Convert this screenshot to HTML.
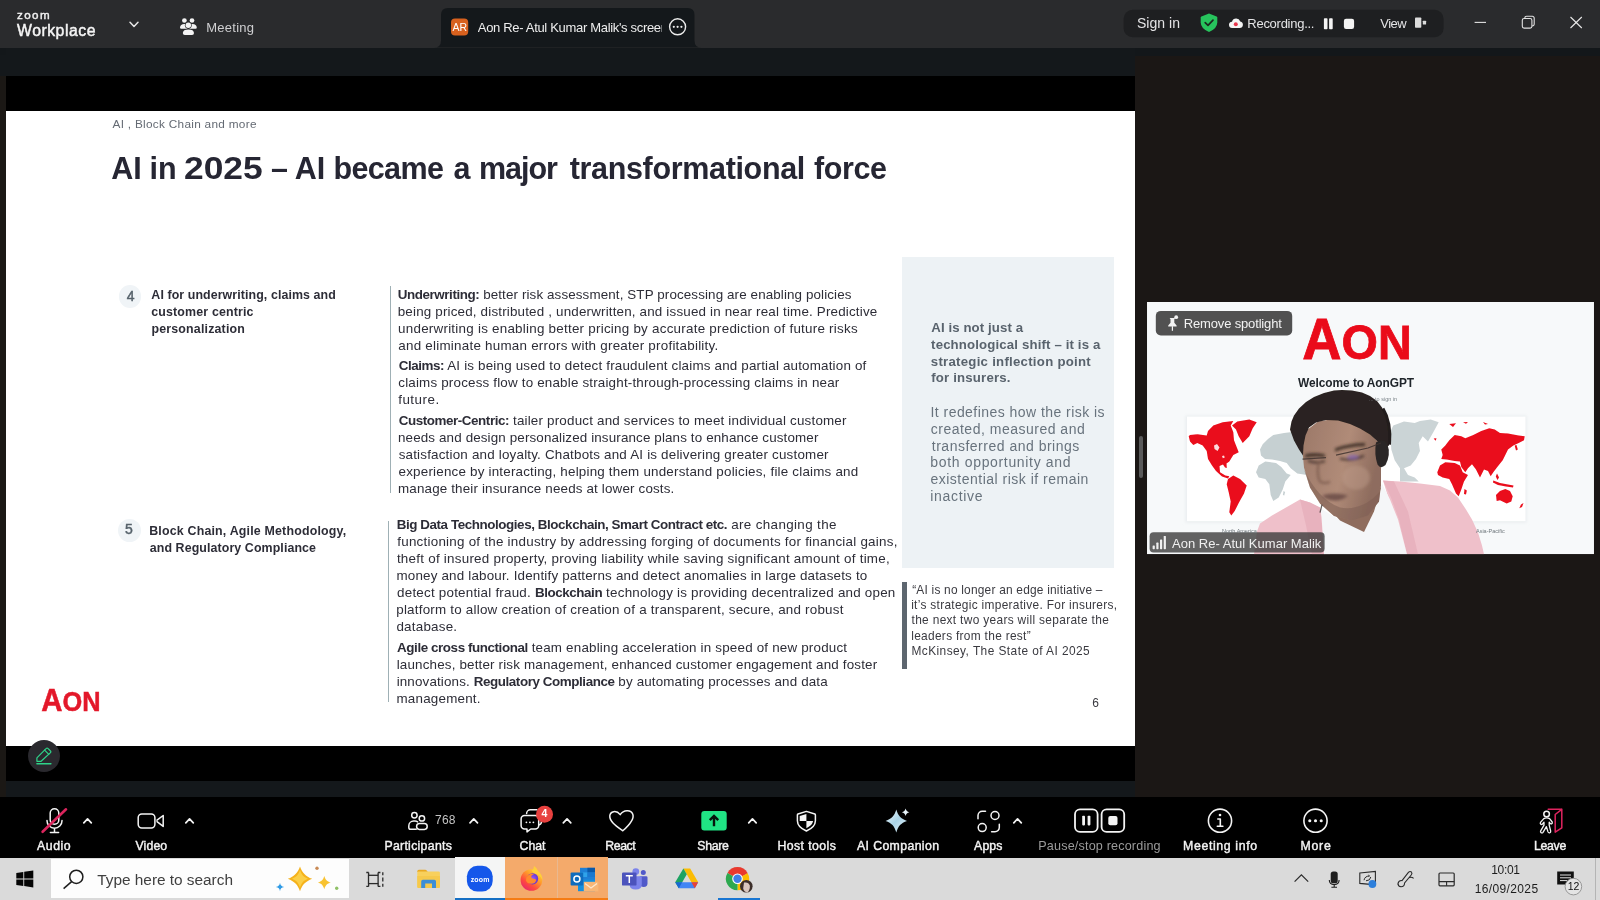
<!DOCTYPE html>
<html lang="en">
<head>
<meta charset="utf-8">
<title>Zoom Workplace - Meeting</title>
<style>
html,body{margin:0;padding:0;background:#1b1715;}
body{width:1600px;height:900px;overflow:hidden;font-family:"Liberation Sans",sans-serif;}
#root{position:relative;width:1600px;height:900px;overflow:hidden;background:#1b1715;opacity:0.9999;}
.a{position:absolute;}
.t{position:absolute;white-space:nowrap;font-family:"Liberation Sans",sans-serif;}
.t b{font-weight:700;letter-spacing:-0.42px;}
svg{position:absolute;overflow:visible;}
.grp{margin:0;padding:0;font-size:0;line-height:0;font-weight:400;position:static;}
</style>
</head>
<body>
<div id="root">
<!-- ===== window chrome backgrounds ===== -->
<div class="a" style="left:0;top:0;width:1600px;height:47.5px;background:#2a2b2d;"></div>
<div class="a" style="left:0;top:47.5px;width:1600px;height:8px;background:#13171a;"></div>
<div class="a" style="left:6px;top:47.5px;width:1129px;height:749.5px;background:#14181b;"></div>
<div class="a" style="left:0;top:55px;width:6px;height:21px;background:#14181b;"></div>
<div class="a" style="left:0;top:76px;width:6px;height:721px;background:#1b1815;"></div>
<div class="a" style="left:6px;top:76px;width:1129px;height:705px;background:#000;"></div>
<div class="a" style="left:6px;top:110.5px;width:1129px;height:635.5px;background:#fff;"></div>
<div class="a" style="left:0;top:797px;width:1600px;height:60.500px;background:#000;"></div>
<div class="a" style="left:0;top:857.500px;width:1600px;height:42.500px;background:#dadada;"></div>
<!-- ===== slide content shapes ===== -->
<div class="a" style="left:902.3px;top:256.7px;width:212px;height:311px;background:#edf2f5;"></div>
<div class="a" style="left:902.2px;top:582px;width:4.6px;height:86.6px;background:#5d666f;"></div>
<div class="a" style="left:389.8px;top:286px;width:1.2px;height:207px;background:#9fb0b5;"></div>
<div class="a" style="left:388.2px;top:521px;width:1.2px;height:181px;background:#9fb0b5;"></div>
<div class="a" style="left:118.700px;top:285.200px;width:22.600px;height:22.600px;border-radius:50%;background:#f0f4f7;"></div>
<div class="a" style="left:117.500px;top:518.600px;width:23px;height:23px;border-radius:50%;background:#f0f4f7;"></div>
<!-- AON logo on slide -->
<svg style="left:40px;top:686px;" width="64" height="28" viewBox="40 686 64 28">
<text x="41.300" y="710.600" font-family="Liberation Sans, sans-serif" font-weight="700" fill="#e3182a" stroke="#e3182a" stroke-width="0.500" textLength="59.200" lengthAdjust="spacingAndGlyphs"><tspan font-size="31.300">A</tspan><tspan font-size="27">ON</tspan></text>
</svg>
<!-- annotate pencil -->
<div class="a" style="left:27.600px;top:739.600px;width:32.800px;height:32.800px;border-radius:50%;background:#2a292e;"></div>
<svg style="left:27px;top:739px;" width="34" height="34" viewBox="27 739 34 34" fill="none" stroke="#2fd389" stroke-width="1.200" stroke-linejoin="round" stroke-linecap="round">
<path d="M36.900 757.800 L46.300 748.400 a1.100 1.100 0 0 1 1.600 0 l2.600 2.600 a1.100 1.100 0 0 1 0 1.600 L41.100 761.300 H36.900 Z"/>
<path d="M44.600 750.100 l4.200 4.200"/>
<path d="M36.900 763.700 H50.900" stroke-width="1.400"/>
</svg>
<!-- ===== title bar ===== -->
<svg style="left:0;top:0;" width="1600" height="48" viewBox="0 0 1600 48">
<path d="M434 47.6 Q441 47.6 441 40.5 L441 15 Q441 8 448 8 L687.5 8 Q694.5 8 694.5 15 L694.5 40.5 Q694.5 47.6 701.5 47.6 Z" fill="#14181b"/>
<path d="M130 22.3 l4 4.2 l4 -4.2" fill="none" stroke="#e6e6e6" stroke-width="1.5" stroke-linecap="round" stroke-linejoin="round"/>
<!-- meeting people icon -->
<g fill="#f4f4f4">
<circle cx="184.400" cy="20.500" r="2.350"/>
<circle cx="192" cy="20.500" r="2.350"/>
<path d="M180 27.600 q0.300 -3.600 4.300 -3.600 q2.300 0 3.200 1.400 v3.400 h-6.300 q-1.200 0 -1.200 -1.200 Z"/>
<path d="M196.800 27.600 q-0.300 -3.600 -4.300 -3.600 q-2.300 0 -3.200 1.400 v3.400 h6.300 q1.200 0 1.200 -1.200 Z"/>
<circle cx="188.300" cy="25.300" r="3.400" fill="#2a2b2d"/>
<circle cx="188.300" cy="25.300" r="2.750"/>
<path d="M182.800 33 q0.300 -3.400 5.600 -3.400 q5.300 0 5.600 3.400 q0 2.100 -2 2.100 h-7.200 q-2 0 -2 -2.100 Z"/>
</g>
<rect x="451" y="18.600" width="17.200" height="16.800" rx="4" fill="#d8611e"/>
<circle cx="677.600" cy="26.800" r="8" fill="none" stroke="#ececec" stroke-width="1.400"/>
<circle cx="673.800" cy="26.800" r="1.100" fill="#ececec"/><circle cx="677.600" cy="26.800" r="1.100" fill="#ececec"/><circle cx="681.400" cy="26.800" r="1.100" fill="#ececec"/>
<rect x="1123.600" y="9.800" width="320" height="27.400" rx="9" fill="#1e1f21"/>
<!-- shield -->
<path d="M1209 13.600 l7.600 2.800 q0.700 0.300 0.700 1 v4.800 q0 6.300 -8.300 9.700 q-8.300 -3.400 -8.300 -9.700 v-4.800 q0 -0.700 0.700 -1 Z" fill="#27c45d"/>
<path d="M1205.200 22.600 l2.800 2.800 l5 -5.300" fill="none" stroke="#1c2a20" stroke-width="1.700" stroke-linecap="round" stroke-linejoin="round"/>
<!-- cloud -->
<path d="M1232.400 28.100 a3.200 3.200 0 0 1 -0.400 -6.400 a4.400 4.400 0 0 1 8.300 -0.300 a3.400 3.400 0 0 1 -0.600 6.700 Z" fill="#f4f4f4"/>
<circle cx="1235.800" cy="24.200" r="2" fill="#e8364b"/>
<rect x="1323.900" y="18.300" width="3.600" height="10.900" rx="0.800" fill="#f4f4f4"/>
<rect x="1329.100" y="18.300" width="3.600" height="10.900" rx="0.800" fill="#f4f4f4"/>
<rect x="1343.900" y="18.700" width="10.200" height="10.200" rx="2.200" fill="#f4f4f4"/>
<rect x="1415" y="17.500" width="6.300" height="10.300" rx="0.800" fill="#dcdcdc"/>
<rect x="1422.800" y="20.700" width="3.300" height="3.800" rx="0.600" fill="#dcdcdc"/>
<!-- window controls -->
<path d="M1474.600 22.400 H1486" stroke="#e2e2e2" stroke-width="1.100"/>
<rect x="1522.300" y="18.500" width="9.600" height="9.600" rx="1.800" fill="none" stroke="#e2e2e2" stroke-width="1.100"/>
<path d="M1524.800 18.300 v-0.200 a1.800 1.800 0 0 1 1.800 -1.800 h5.800 a1.800 1.800 0 0 1 1.800 1.800 v6 a1.800 1.800 0 0 1 -1.800 1.800 h-0.300" fill="none" stroke="#e2e2e2" stroke-width="1.100"/>
<path d="M1570.500 17 l11.300 11 M1581.800 17 l-11.300 11" stroke="#e8e8e8" stroke-width="1.100"/>
</svg>
<!-- ===== meeting toolbar icons ===== -->
<svg style="left:0;top:797px;" width="1600" height="60" viewBox="0 797 1600 60" fill="none" stroke="#f4f4f4" stroke-width="1.5" stroke-linecap="round" stroke-linejoin="round">
<!-- mic muted -->
<rect x="50.200" y="808.800" width="8.600" height="15.400" rx="4.300"/>
<path d="M47 820.400 v0.300 a7.500 7.500 0 0 0 15 0 v-0.300 M54.500 828.200 v4.300 M50.400 832.600 h8.200"/>
<path d="M42.600 831.800 L66 809.300" stroke="#da255d" stroke-width="2.600"/>
<path d="M83.800 822.800 l3.750 -4 l3.750 4" stroke-width="1.700"/>
<!-- video -->
<rect x="138.200" y="814" width="16.700" height="13.900" rx="3.600"/>
<path d="M157 820.200 l6.200 -4.700 v10.900 l-6.200 -4.700"/>
<path d="M185.800 822.800 l3.750 -4 l3.750 4" stroke-width="1.700"/>
<!-- participants -->
<circle cx="414.400" cy="815.300" r="2.700"/>
<path d="M416.200 829.200 h-5.600 a1.800 1.800 0 0 1 -1.800 -1.800 v-1.500 a4.800 4.800 0 0 1 4.800 -4.800 h1.400 a4.600 4.600 0 0 1 2.600 0.800"/>
<circle cx="421.900" cy="818.400" r="2.700"/>
<path d="M419.500 823.400 h4.800 a2.900 2.900 0 0 1 2.900 2.900 v0.300 a2.800 2.800 0 0 1 -2.800 2.800 h-5 a2.800 2.800 0 0 1 -2.800 -2.800 v-0.300 a2.900 2.900 0 0 1 2.900 -2.900 Z"/>
<path d="M470 822.800 l3.750 -4 l3.750 4" stroke-width="1.700"/>
<!-- chat -->
<path d="M526.600 813.600 a3.800 3.800 0 0 1 3.800 -3.800 h6.500 M541.500 818 v3.500 a3.600 3.600 0 0 1 -2.400 3.400"/>
<path d="M524.600 815.600 h10.600 a3.500 3.500 0 0 1 3.500 3.500 v6.400 a3.500 3.500 0 0 1 -3.500 3.500 h-4.400 l-3.800 2.900 v-2.900 h-2.400 a3.500 3.500 0 0 1 -3.500 -3.500 v-6.400 a3.500 3.500 0 0 1 3.500 -3.500 Z"/>
<circle cx="526.400" cy="822.300" r="0.900" fill="#f4f4f4" stroke="none"/><circle cx="529.900" cy="822.300" r="0.900" fill="#f4f4f4" stroke="none"/><circle cx="533.400" cy="822.300" r="0.900" fill="#f4f4f4" stroke="none"/>
<circle cx="544.500" cy="814.300" r="8.500" fill="#e8413f" stroke="none"/>
<path d="M563.300 822.800 l3.750 -4 l3.750 4" stroke-width="1.700"/>
<!-- heart -->
<path d="M622.800 830.800 C616.500 826.200 609.300 821.400 609.800 815.800 C610.200 811.400 616.200 809.600 620.200 814.600 C623.400 809.800 631 809.400 632.800 814.200 C634.800 819.600 628.200 826 622.800 830.800 Z"/>
<!-- share -->
<rect x="701.300" y="811" width="25.400" height="19.600" rx="3" fill="#20e384" stroke="none"/>
<path d="M714 826.200 v-9.600 M709.800 820.200 l4.200 -4.200 l4.200 4.200" stroke="#07140c" stroke-width="2.400" stroke-linecap="butt" stroke-linejoin="miter"/>
<path d="M748.700 822.800 l3.750 -4 l3.750 4" stroke-width="1.700"/>
<!-- host tools shield -->
<path d="M806.400 811.400 l8.400 2.600 q0.600 0.200 0.600 0.900 v5.800 q0 6.300 -9 10.300 q-9 -4 -9 -10.300 v-5.800 q0 -0.700 0.600 -0.900 Z"/>
<path d="M806.400 814 v7.100 h-6.700 v-5 Z M806.400 821.100 h6.700 q-0.600 4.200 -6.700 7.200 Z" fill="#f4f4f4" stroke="none"/>
<!-- apps -->
<path d="M985.500 811.300 h-3.200 a4.300 4.300 0 0 0 -4.300 4.300 v3.200"/>
<circle cx="995" cy="815.500" r="4"/>
<circle cx="982.200" cy="827.600" r="4"/>
<path d="M991.600 831.700 h3.400 a4.300 4.300 0 0 0 4.300 -4.300 v-3.200"/>
<path d="M1013.800 822.800 l3.750 -4 l3.750 4" stroke-width="1.700"/>
<!-- pause/stop -->
<rect x="1075" y="809.300" width="22.600" height="22.600" rx="5" stroke-width="1.800"/>
<rect x="1101.600" y="809.300" width="22.600" height="22.600" rx="5" stroke-width="1.800"/>
<rect x="1082.200" y="815.800" width="2.800" height="9.600" rx="0.800" fill="#f4f4f4" stroke="none"/>
<rect x="1087.600" y="815.800" width="2.800" height="9.600" rx="0.800" fill="#f4f4f4" stroke="none"/>
<rect x="1108.300" y="816" width="9.200" height="9.200" rx="2" fill="#f4f4f4" stroke="none"/>
<!-- info -->
<circle cx="1220" cy="820.700" r="11.600" stroke-width="1.600"/>
<circle cx="1220" cy="815" r="1.300" fill="#f4f4f4" stroke="none"/>
<path d="M1217.800 819 h2.500 v7.200 M1217.300 826.300 h5.600" stroke-width="1.600"/>
<!-- more -->
<circle cx="1315.500" cy="820.700" r="11.600" stroke-width="1.600"/>
<circle cx="1309.800" cy="820.700" r="1.550" fill="#f4f4f4" stroke="none"/><circle cx="1315.500" cy="820.700" r="1.550" fill="#f4f4f4" stroke="none"/><circle cx="1321.200" cy="820.700" r="1.550" fill="#f4f4f4" stroke="none"/>
<!-- leave -->
<path d="M1548.200 809.300 h13.600 v18.600 l-6.600 4.300 v-17.700 l6.600 -5.200" stroke="#df245f" stroke-width="1.500"/>
<circle cx="1546.600" cy="814" r="2.800"/>
<path d="M1543.800 818.600 q2.800 -1.600 5.800 0 l2.600 3.400 q0.600 1.200 -0.600 1.800 q-1 0.400 -1.700 -0.600 l-0.700 -1 v3 l1.500 6 q0.200 1.400 -1 1.700 q-1.300 0.200 -1.700 -1 l-1.600 -5.200 l-3.400 5.600 q-0.800 1 -1.900 0.400 q-1 -0.700 -0.400 -1.900 l3.300 -5.600 v-3 l-1.500 1.800 q-0.800 0.800 -1.700 0.200 q-0.900 -0.800 -0.300 -1.800 Z" stroke-width="1.300"/>
</svg>
<!-- AI companion sparkle -->
<svg style="left:880px;top:805px;" width="34" height="30" viewBox="880 805 34 30">
<defs><linearGradient id="aig" x1="0" y1="0" x2="1" y2="1"><stop offset="0" stop-color="#f4fbff"/><stop offset="0.500" stop-color="#a9d3e6"/><stop offset="1" stop-color="#e9f5fb"/></linearGradient></defs>
<path d="M896.300 809.600 C898.200 816 900.800 818.800 907 821 C900.800 823.200 898.200 826 896.300 832.400 C894.400 826 891.800 823.200 885.600 821 C891.800 818.800 894.400 816 896.300 809.600 Z" fill="url(#aig)"/>
<path d="M905.600 808.400 C906.300 810.700 907.100 811.500 909.400 812.200 C907.100 812.900 906.300 813.700 905.600 816 C904.900 813.700 904.100 812.900 901.800 812.200 C904.100 811.500 904.900 810.700 905.600 808.400 Z" fill="#e6f3fa"/>
</svg>
<!-- ===== windows taskbar ===== -->
<div class="a" style="left:51.300px;top:858.800px;width:297.500px;height:39.400px;background:#fdfdfd;"></div>
<div class="a" style="left:455px;top:857px;width:50.200px;height:43px;background:#f5f5f5;"></div>
<div class="a" style="left:455px;top:897.800px;width:50.200px;height:2.200px;background:#1670c4;"></div>
<div class="a" style="left:505.200px;top:857px;width:103.200px;height:43px;background:#f4aa6b;"></div>
<div class="a" style="left:556.900px;top:857px;width:1.300px;height:43px;background:#e9b88f;"></div>
<div class="a" style="left:505.200px;top:897.800px;width:103.200px;height:2.200px;background:#f57c14;"></div>
<div class="a" style="left:717.600px;top:897.800px;width:42px;height:2.200px;background:#1976d2;"></div>
<div class="a" style="left:1595px;top:857.500px;width:1px;height:42.500px;background:#b4b4b4;"></div>
<svg style="left:0;top:857px;" width="1600" height="43" viewBox="0 857 1600 43">
<!-- windows logo -->
<path d="M16.300 872.900 l7 -1 v6.600 h-7 Z M24.200 871.800 l9.100 -1.300 v8 h-9.100 Z M16.300 879.400 h7 v6.600 l-7 -1 Z M24.200 879.400 h9.100 v8 l-9.100 -1.300 Z" fill="#050505"/>
<!-- search glass -->
<circle cx="76.300" cy="876.800" r="6.600" fill="none" stroke="#1d1d1d" stroke-width="1.500"/>
<path d="M71.600 881.600 L63.600 888.600" stroke="#1d1d1d" stroke-width="1.500"/>
<!-- sparkles -->
<path d="M300 866.400 C302.200 872.800 305.600 876.200 312.200 878.800 C305.600 881.400 302.200 884.800 300 891.200 C297.800 884.800 294.400 881.400 287.800 878.800 C294.400 876.200 297.800 872.800 300 866.400 Z" fill="#f5b21c"/>
<path d="M300 870 C301.400 874.600 303.600 877 308 878.800 C303.600 880.600 301.400 883 300 887.600 C298.600 883 296.400 880.600 292 878.800 C296.400 877 298.600 874.600 300 870 Z" fill="#fbcf47"/>
<path d="M324.300 876 C325.400 879.800 327 881.400 330.800 882.600 C327 883.800 325.400 885.400 324.300 889.200 C323.200 885.400 321.600 883.800 317.800 882.600 C321.600 881.400 323.200 879.800 324.300 876 Z" fill="#f8c230"/>
<path d="M280 882.800 C280.400 885.400 281.400 886.400 284.200 887 C281.400 887.600 280.400 888.600 280 891.200 C279.600 888.600 278.600 887.600 275.800 887 C278.600 886.400 279.600 885.400 280 882.800 Z" fill="#2f9be6"/>
<circle cx="317" cy="868.200" r="1.700" fill="#c98a55"/>
<circle cx="336.700" cy="888.200" r="1.700" fill="#8fc167"/>
<!-- task view -->
<g fill="none" stroke="#2a2a2a" stroke-width="1.300">
<rect x="368.500" y="875.300" width="9.600" height="8.300"/>
<path d="M366.300 872.500 h2.400 M378 872.500 h2.400 M366.300 886.400 h2.400 M378 886.400 h2.400 M368.600 872.500 v2.800 M378.100 872.500 v2.800 M368.600 883.600 v2.800 M378.100 883.600 v2.800 M382.800 872.300 v3 M382.800 877.600 v4 M382.800 883.800 v3"/>
</g>
<!-- file explorer -->
<path d="M417.300 871.300 q0 -1.500 1.500 -1.500 h6.300 q1.200 0 1.800 1 l0.900 1.300 h-10.500 Z" fill="#e9a922"/>
<rect x="417.300" y="871.600" width="22.600" height="16.400" rx="1.200" fill="#f8d05c"/>
<path d="M417.300 876 h22.600 v10.800 q0 1.200 -1.200 1.200 h-20.200 q-1.200 0 -1.200 -1.200 Z" fill="#f6c94c"/>
<path d="M421.200 888 v-6.600 q0 -1.600 1.600 -1.600 h11.600 q1.600 0 1.600 1.600 v6.600 h-4 v-4.400 h-6.800 v4.400 Z" fill="#3c8ed6"/>
<!-- zoom app -->
<rect x="466.900" y="865.800" width="25.800" height="25.800" rx="10.500" fill="#1557ea"/>
<!-- firefox -->
<defs>
<linearGradient id="ffg" x1="0.850" y1="0.100" x2="0.200" y2="0.950"><stop offset="0" stop-color="#ffd53e"/><stop offset="0.350" stop-color="#ff9a2a"/><stop offset="0.700" stop-color="#ff4a3e"/><stop offset="1" stop-color="#e8286a"/></linearGradient>
<radialGradient id="ffp" cx="0.500" cy="0.500" r="0.600"><stop offset="0" stop-color="#9a5cff"/><stop offset="1" stop-color="#5b2fc4"/></radialGradient>
</defs>
<circle cx="531.400" cy="880" r="10.800" fill="url(#ffg)"/>
<path d="M534 866 q3.400 2 4.600 5.800 q3.800 3.400 3.800 8.200 q-2.400 -4.800 -6.400 -6 q-3 -0.800 -4.200 -3.200 q2.200 -1.800 2.200 -4.800 Z" fill="#ffcf3a"/>
<circle cx="532.600" cy="878.800" r="5.600" fill="url(#ffp)"/>
<path d="M526 880.400 q0.200 -5 4.400 -6.400 q2 -0.600 3.600 0.200 q-2.800 0.600 -2.800 2.600 q0.200 1.800 2.400 2 q2 0 2.600 1.400 q-1 3.600 -5 3.600 q-4 -0.200 -5.200 -3.400 Z" fill="#ff8a2c"/>
<!-- outlook -->
<rect x="580" y="867.800" width="15" height="13.600" fill="#1e7fd6"/>
<rect x="587.400" y="867.800" width="7.600" height="4.600" fill="#0a58a8"/>
<rect x="580" y="872.400" width="7.400" height="4.600" fill="#2fa3ea"/>
<rect x="587.400" y="872.400" width="7.600" height="4.600" fill="#1a78cf"/>
<rect x="578" y="879.600" width="17" height="11.600" fill="#1490df"/>
<rect x="570.600" y="872.600" width="12.600" height="12.800" rx="1" fill="#0f6cbd"/>
<circle cx="576.900" cy="879" r="3" fill="none" stroke="#ffffff" stroke-width="1.500"/>
<path d="M583.800 881.800 h14.600 v9.600 h-14.600 Z" fill="#f7b777"/>
<path d="M585 883.400 l6 4.600 l6 -4.600" fill="none" stroke="#fde7cf" stroke-width="1.300"/>
<!-- teams -->
<circle cx="635.800" cy="871.600" r="3.400" fill="#7b83eb"/>
<circle cx="643.300" cy="872.400" r="2.500" fill="#5059c9"/>
<path d="M639.800 876.200 h6.400 q1.300 0 1.300 1.300 v5.700 q0 3.800 -3.800 3.800 q-3.900 0 -3.900 -3.800 Z" fill="#5059c9"/>
<path d="M629.600 876.200 h11 q1.200 0 1.200 1.200 v6.800 q0 5.400 -6.100 5.400 q-6.100 0 -6.100 -5.400 Z" fill="#7b83eb"/>
<rect x="622" y="872.400" width="14.500" height="13.200" rx="1.200" fill="#4b53bc"/>
<path d="M625.800 875.800 h7 M629.300 875.800 v7.200" stroke="#ffffff" stroke-width="1.500" fill="none"/>
<!-- drive -->
<path d="M683.400 868.400 h6.800 l8 13.800 h-6.800 Z" fill="#fbbc04"/>
<path d="M683.400 868.400 l3.400 5.900 l-8 13.900 l-3.600 -6 Z" fill="#1ea362"/>
<path d="M679 882.200 h19.200 l-3.400 6 h-16 Z" fill="#4285f4"/>
<path d="M691.400 882.200 h6.800 l-3.400 6 Z" fill="#ea4335"/>
<path d="M675.200 882.200 l3.600 6 l3.400 -6 Z" fill="#1967d2"/>
<!-- chrome -->
<path d="M737.50 878.70 L727.45 872.90 A11.6 11.6 0 0 1 747.55 872.90 Z" fill="#e8392e"/>
<path d="M737.50 878.70 L747.55 872.90 A11.6 11.6 0 0 1 737.50 890.30 Z" fill="#fdbd00"/>
<path d="M737.50 878.70 L737.50 890.30 A11.6 11.6 0 0 1 727.45 872.90 Z" fill="#2da94f"/>
<path d="M737.50 873.40 L747.55 872.90 L742.09 876.05 Z" fill="#e8392e"/>
<circle cx="737.5" cy="878.7" r="5.3" fill="#ffffff"/>
<circle cx="737.5" cy="878.7" r="4.200" fill="#3f7fe8"/>
<circle cx="746.300" cy="886.300" r="6.300" fill="#3c2e2a"/>
<path d="M744 882.600 q4.400 -1 5.800 2.800 q0.400 4.600 -2.400 7 q-3.600 -0.400 -4.200 -4 Z" fill="#d9c6be"/>
<!-- tray -->
<path d="M1294.600 881.600 l6.800 -6.800 l6.800 6.800" fill="none" stroke="#2a2a2a" stroke-width="1.200"/>
<rect x="1330.700" y="871.500" width="7" height="11.800" rx="2.600" fill="#1f1f1f"/>
<path d="M1329.300 880 q0 4.600 4.900 4.600 q4.900 0 4.900 -4.600 M1334.200 884.600 v2.600 M1331.400 887.300 h5.600" fill="none" stroke="#1f1f1f" stroke-width="1.100"/>
<path d="M1359.800 873 l15.600 -1.600 v13.400 l-15.600 -1.400 Z" fill="none" stroke="#2a2a2a" stroke-width="1.100"/>
<path d="M1364 880.200 q1 -4.400 5.400 -4 l-0.800 -1.400 M1370.800 877 q-0.600 3.800 -4.800 3.800" fill="none" stroke="#2a2a2a" stroke-width="1"/>
<circle cx="1372.400" cy="884" r="3.900" fill="#2d7fdb"/>
<path d="M1398 883.600 q0.600 -3.400 4 -3 l6.400 -8.200 q1.600 -1.600 3 -0.400 q1.200 1.400 -0.200 3 l-6.600 8 q-0.200 3.800 -3.600 3.800 q-3 -0.200 -3 -3.200 Z M1408.800 877.800 q2.800 -1.400 4.800 0.600" fill="none" stroke="#2a2a2a" stroke-width="1.100"/>
<rect x="1439" y="873" width="15.200" height="12.800" rx="1" fill="none" stroke="#2a2a2a" stroke-width="1.200"/>
<path d="M1439 881.600 h15.200 M1446.600 881.600 v4.200" stroke="#2a2a2a" stroke-width="1.100"/>
<path d="M1557.200 871.400 h16.600 v13 h-11.800 l-4.800 0 Z" fill="#111"/>
<path d="M1560 875 h11 M1560 877.800 h11 M1560 880.600 h7" stroke="#e1e1e1" stroke-width="1"/>
<circle cx="1573.400" cy="886.600" r="8.300" fill="#e4e4e4" stroke="#8e8e8e" stroke-width="0.900"/>
</svg>
<!-- ===== right panel: spotlight video tile ===== -->
<div class="a" style="left:1139px;top:436px;width:3.600px;height:42px;border-radius:2px;background:#5a5a5a;"></div>
<svg style="left:1147px;top:302.400px;" width="447" height="252.200" viewBox="1147 302.400 447 252.200">
<defs>
<clipPath id="tileclip"><rect x="1147" y="302.400" width="447" height="252.200"/></clipPath>
<filter id="soft" x="-5%" y="-5%" width="110%" height="110%"><feGaussianBlur stdDeviation="0.700"/></filter>
<filter id="soft2" x="-10%" y="-10%" width="120%" height="120%"><feGaussianBlur stdDeviation="1.600"/></filter>
<linearGradient id="skin" x1="0" y1="0" x2="1" y2="0.300"><stop offset="0" stop-color="#9b7868"/><stop offset="0.600" stop-color="#b08b78"/><stop offset="1" stop-color="#8e6c5e"/></linearGradient>
</defs>
<g clip-path="url(#tileclip)">
<rect x="1147" y="302.400" width="447" height="252.200" fill="#f7f9fa"/>
<!-- map card -->
<rect x="1185.500" y="416" width="341" height="107" fill="#e9edef" filter="url(#soft2)"/>
<rect x="1187" y="417" width="338.500" height="104.600" fill="#ffffff"/>
<g filter="url(#soft)">
<!-- left map: americas red -->
<path d="M1188.7 436.7 L1190.0 435.3 L1197.3 434.7 L1206.7 436.0 L1208.0 431.3 L1213.3 426.0 L1222.7 422.7 L1233.3 421.3 L1230.7 426.0 L1233.3 432.7 L1234.0 440.7 L1238.7 452.7 L1233.3 455.3 L1229.3 462.0 L1226.5 464.0 L1226.8 468.5 L1225.0 468.0 L1223.0 465.0 L1219.5 466.5 L1220.0 472.7 L1225.3 476.0 L1229.3 476.7 L1228.0 479.0 L1222.0 477.0 L1216.0 471.3 L1212.0 466.0 L1208.0 459.3 L1206.7 451.3 L1202.7 446.0 L1197.3 443.3 L1193.3 445.3 L1190.0 442.0 Z" fill="#ea0b1a"/>
<path d="M1232.0 426.0 L1237.3 422.0 L1249.3 420.0 L1256.7 422.7 L1252.7 428.7 L1249.3 436.7 L1242.7 443.3 L1238.7 436.7 L1236.0 430.0 Z" fill="#ea0b1a"/>
<path d="M1228.0 479.3 L1233.3 476.0 L1240.0 479.3 L1246.7 486.0 L1244.0 494.0 L1238.7 503.3 L1234.7 511.3 L1231.3 516.0 L1229.3 512.7 L1230.7 502.0 L1228.7 492.7 L1226.7 484.7 Z" fill="#ea0b1a"/>
<!-- left map: europe africa grey -->
<path d="M1260.0 450.0 L1262.7 444.7 L1268.0 439.3 L1273.3 435.3 L1284.0 433.5 L1296.0 432.0 L1310.0 431.0 L1310.0 476.0 L1297.3 474.0 L1290.7 468.7 L1286.7 463.3 L1280.0 461.5 L1272.0 460.0 L1265.0 459.5 L1261.0 456.0 Z" fill="#c6d0d2"/>
<path d="M1256.0 472.7 L1258.7 466.0 L1265.3 462.0 L1276.0 463.3 L1281.3 467.3 L1286.7 474.0 L1290.7 475.3 L1285.3 482.0 L1282.7 490.0 L1278.7 498.0 L1273.3 501.3 L1270.7 495.3 L1269.3 484.7 L1265.3 479.3 L1258.7 478.0 Z" fill="#c6d0d2"/>
<path d="M1283.5 491.5 l1.600 1 l-0.800 3.500 l-1.400 -0.700 Z" fill="#c6d0d2"/>
<!-- right map: north america grey -->
<path d="M1390.0 432.7 L1393.3 426.0 L1404.0 422.0 L1414.7 423.3 L1420.0 421.3 L1430.7 420.0 L1438.7 422.7 L1433.3 432.7 L1428.0 442.0 L1422.7 436.7 L1418.7 443.3 L1420.0 451.3 L1416.0 459.3 L1410.7 466.0 L1404.0 468.7 L1408.0 475.3 L1414.7 478.0 L1418.7 482.0 L1400.0 482.0 L1400.0 468.7 L1394.7 460.7 L1391.3 450.0 L1390.7 440.7 Z" fill="#cbd4d6"/>
<!-- right map: eurasia africa australia red -->
<path d="M1441.3 450.0 L1445.3 446.0 L1449.3 440.7 L1454.7 435.3 L1461.3 436.7 L1465.3 438.7 L1473.3 435.3 L1481.3 431.3 L1489.3 428.7 L1494.7 430.0 L1500.0 433.3 L1508.0 434.0 L1518.7 436.0 L1524.7 436.7 L1524.0 440.7 L1518.7 443.3 L1513.3 446.0 L1508.0 450.0 L1505.3 455.3 L1502.7 460.7 L1497.3 467.3 L1493.3 472.7 L1490.7 476.7 L1488.0 471.3 L1484.0 470.0 L1480.0 478.0 L1476.0 470.0 L1472.0 464.7 L1468.0 468.7 L1465.3 472.7 L1461.3 467.3 L1460.0 462.0 L1454.7 461.3 L1446.7 460.0 L1441.3 459.3 L1442.7 455.3 Z" fill="#ea0b1a"/>
<path d="M1437.3 472.7 L1440.0 466.0 L1445.3 462.7 L1454.7 463.3 L1460.0 466.0 L1462.7 472.7 L1468.0 475.3 L1464.0 482.0 L1461.3 490.0 L1458.7 496.7 L1456.0 494.0 L1452.0 484.7 L1449.3 479.3 L1442.7 478.0 L1438.0 475.3 Z" fill="#ea0b1a"/>
<path d="M1496.0 495.3 L1500.0 491.3 L1505.3 489.3 L1510.0 491.3 L1512.7 496.7 L1511.3 502.0 L1506.7 504.0 L1500.0 500.7 L1496.7 501.3 Z" fill="#ea0b1a"/>
<path d="M1464.5 489.5 L1466.8 491.0 L1466.0 495.0 L1464.0 494.5 Z" fill="#ea0b1a"/>
<path d="M1519.3 508.7 L1521.0 505.0 L1523.5 503.5 L1522.0 507.5 Z" fill="#ea0b1a"/>
<path d="M1493.3 481.0 L1500.0 483.5 L1508.0 485.0 L1513.5 486.0 L1513.0 487.8 L1506.0 487.0 L1498.0 485.5 L1493.0 483.0 Z" fill="#ea0b1a"/>
<path d="M1449.3 424.3 L1456.0 423.7 L1453.0 427.3 Z" fill="#ea0b1a"/>
<path d="M1433.7 439.0 L1436.5 438.7 L1435.6 441.2 Z" fill="#ea0b1a"/>
<path d="M1483.0 422.3 L1488.0 424.3 L1485.0 424.8 Z" fill="#ea0b1a"/>
<path d="M1463.0 422.6 L1468.0 422.4 L1466.0 424.2 Z" fill="#ea0b1a"/>
<path d="M1514.7 446.0 L1516.5 445.5 L1517.8 450.0 L1516.0 451.0 Z" fill="#ea0b1a"/>
<path d="M1497.0 474.0 L1499.0 478.0 L1497.5 480.5 L1495.8 477.0 Z" fill="#ea0b1a"/>
<path d="M1214 446 l3 -1.500 l2.500 3.500 l-2 3.500 l-3 -2 Z M1222 456.500 l2 -0.600 l0.800 2 l-2 0.800 Z" fill="#ffffff" opacity="0.850"/>
</g>
<!-- person -->
<g filter="url(#soft)">
<!-- jacket -->
<path d="M1254 554.600 L1257 532 L1260 524 L1272 516 L1286 508 L1300 500 L1310 503 L1320 508 L1330 554.600 Z" fill="#efc0ca"/>
<path d="M1383 481 L1400 482 L1420 484 L1440 486.500 L1450 491 L1458 498 L1466 510 L1472 520 L1478 533 L1482 546 L1484 554.600 L1400 554.600 L1392 510 Z" fill="#efc0ca"/>
<path d="M1300 500 L1310 503 L1320 508 L1325 554.600 L1312 554.600 L1306 526 Z" fill="#e5adb9" opacity="0.750"/>
<path d="M1383 481 L1391 498 L1399 520 L1407 554.600 L1418 554.600 L1408 512 L1394 482 Z" fill="#e5adb9" opacity="0.750"/>
<!-- shirt -->
<path d="M1321 509 L1324 554.600 L1407 554.600 L1398 520 L1390 500 L1382 484 L1376 504 L1364 532 L1345 524 Z" fill="#f5f6f8"/>
<!-- neck -->
<path d="M1326 506 L1340 521 L1364 532.500 L1374 512 L1381 488 L1350 496 Z" fill="#8f6c5d"/>
<!-- face -->
<path d="M1302 446 L1305 432 L1318 422 L1336 419 L1354 424 L1370 434 L1378 442 L1381 466 L1381 486 L1379 502 L1368 516 L1352 521 L1334 516.500 L1320 504 L1310 488 L1304 468 Z" fill="url(#skin)"/>
<path d="M1304 470 L1310 488 L1320 504 L1334 516.500 L1352 521 L1368 516 L1379 502 L1380 492 Q1362 512 1340 508 Q1318 500 1304 470 Z" fill="#7e5f54" opacity="0.550"/>
<!-- hair -->
<path d="M1290 430 L1291.500 422 L1294 416 L1299 409 L1306 402.500 L1314 397.500 L1324 393.500 L1334 391 L1342 390.400 L1352 391 L1362 393 L1370 396.500 L1377 401.500 L1382 408 L1386 416 L1388.500 425 L1389.600 434 L1389 446 L1385 448 L1379 443 L1370 435 L1360 429 L1350 424.500 L1338 420.800 L1326 420.500 L1316 423 L1309 428 L1305.500 436 L1303.500 446 L1303 456 L1299 450 L1294 441 Z" fill="#2a2320"/>
<!-- headset -->
<path d="M1376 443 q6.500 -5.500 11.500 2 q3.500 10 -2 20.500 q-5 4.500 -8 -0.500 q-3.500 -10.500 -1.500 -22 Z" fill="#2c2726"/>
<path d="M1383 409 q8.500 14 6.500 36" fill="none" stroke="#221d1c" stroke-width="3"/>
</g>
<g filter="url(#soft2)" opacity="0.900">
<path d="M1305 455 q9 -2.500 20 0 l0 2.500 q-10 -1.500 -20 0.500 Z M1335 449 q14 -5.500 30 -5.500 l0 3 q-15 0 -30 5.500 Z" fill="#33251f"/>
<path d="M1308 461 q8 3.500 17 0.500 M1340 459 q12 3 24 -3" fill="none" stroke="#4b3730" stroke-width="2.400"/>
<ellipse cx="1353" cy="457.500" rx="5.500" ry="2.600" fill="#7d5fd0" opacity="0.550"/>
<path d="M1322 496 q12 -4 26 0 q-6 5.500 -14 5 q-8 -0.500 -12 -5 Z" fill="#6e4f48"/>
<path d="M1319 462 q-3 12 1 20 q5 3 10 0" fill="none" stroke="#7a5a4d" stroke-width="2"/>
<ellipse cx="1356" cy="478" rx="14" ry="12" fill="#bb9986" opacity="0.550"/>
</g>
<path d="M1302.500 459.500 L1326 458 M1336 455.500 L1368 448.500 L1381 443.500" fill="none" stroke="#40322f" stroke-width="1.100" opacity="0.850"/>
<path d="M1322 505 l-2 8" stroke="#2a2320" stroke-width="1.300" opacity="0.700"/>
<!-- remove spotlight pill -->
<rect x="1155.800" y="311.300" width="136.400" height="24.600" rx="5" fill="#4a4a4a" opacity="0.960"/>
<g fill="#f2f2f2"><path d="M1169.600 318.400 h5.600 l-0.900 1.300 v3.500 l2.300 2.600 v1.100 h-8.400 v-1.100 l2.300 -2.600 v-3.500 Z"/><rect x="1171.800" y="326.600" width="1.200" height="4.600"/><circle cx="1176.200" cy="317.600" r="1.900"/></g>
<!-- name label -->
<rect x="1149.600" y="532.600" width="175" height="20.400" rx="4" fill="#3c3c3c" opacity="0.800"/>
<g fill="#f0f0f0"><rect x="1152.600" y="545.800" width="2.200" height="3.800" rx="0.600"/><rect x="1156.300" y="543" width="2.200" height="6.600" rx="0.600"/><rect x="1160" y="539.800" width="2.200" height="9.800" rx="0.600"/><rect x="1163.700" y="536.400" width="2.200" height="13.200" rx="0.600"/></g>
</g>
<!-- AON logo in video -->
<text x="1302.200" y="359.400" font-family="Liberation Sans, sans-serif" font-weight="700" fill="#ea0b1a" stroke="#ea0b1a" stroke-width="0.800" textLength="109.500" lengthAdjust="spacingAndGlyphs"><tspan font-size="56.500">A</tspan><tspan font-size="48.600">ON</tspan></text>
<text x="1369" y="401" font-family="Liberation Sans, sans-serif" font-size="5.500" fill="#7d858a">... to sign in</text>
<text x="1222" y="533" font-family="Liberation Sans, sans-serif" font-size="5.500" fill="#6f777c">North America</text>
<text x="1476" y="533" font-family="Liberation Sans, sans-serif" font-size="5.500" fill="#6f777c">Asia-Pacific</text>
</svg>
<div class="t" id="t0" style="left:112.50px;top:117.24px;font-size:11.8px;line-height:15.34px;font-weight:400;color:#646a73;letter-spacing:0.289px;">AI , Block Chain and more</div>
<h1 class="grp"><span class="t" id="t1" style="left:76.5px;width:100px;text-align:center;top:148.91px;font-size:30.5px;line-height:39.65px;font-weight:700;color:#262633;">AI</span>
<span class="t" id="t2" style="left:113.0px;width:100px;text-align:center;top:148.91px;font-size:30.5px;line-height:39.65px;font-weight:700;color:#262633;">in</span>
<span class="t" id="t3" style="left:183.54px;top:148.91px;font-size:30.5px;line-height:39.65px;font-weight:700;color:#262633;transform-origin:0 0;transform:scaleX(1.1602);">2025</span>
<span class="t" id="t4" style="left:229.375px;width:100px;text-align:center;top:148.91px;font-size:30.5px;line-height:39.65px;font-weight:700;color:#262633;">–</span>
<span class="t" id="t5" style="left:260.0px;width:100px;text-align:center;top:148.91px;font-size:30.5px;line-height:39.65px;font-weight:700;color:#262633;">AI</span>
<span class="t" id="t6" style="left:333.40px;top:148.91px;font-size:30.5px;line-height:39.65px;font-weight:700;color:#262633;letter-spacing:-0.616px;">became</span>
<span class="t" id="t7" style="left:411.875px;width:100px;text-align:center;top:148.91px;font-size:30.5px;line-height:39.65px;font-weight:700;color:#262633;">a</span>
<span class="t" id="t8" style="left:478.95px;top:148.91px;font-size:30.5px;line-height:39.65px;font-weight:700;color:#262633;letter-spacing:-1.004px;">major</span>
<span class="t" id="t9" style="left:569.70px;top:148.91px;font-size:30.5px;line-height:39.65px;font-weight:700;color:#262633;letter-spacing:-0.335px;">transformational</span>
<span class="t" id="t10" style="left:814.10px;top:148.91px;font-size:30.5px;line-height:39.65px;font-weight:700;color:#262633;letter-spacing:-0.421px;">force</span></h1>
<div class="t" id="t11" style="left:151.35px;top:286.94px;font-size:12.4px;line-height:16.12px;font-weight:700;color:#2d2d37;letter-spacing:0.088px;">AI for underwriting, claims and</div>
<div class="t" id="t12" style="left:151.25px;top:304.04px;font-size:12.4px;line-height:16.12px;font-weight:700;color:#2d2d37;letter-spacing:0.159px;">customer centric</div>
<div class="t" id="t13" style="left:151.45px;top:321.04px;font-size:12.4px;line-height:16.12px;font-weight:700;color:#2d2d37;letter-spacing:0.179px;">personalization</div>
<div class="t" id="t14" style="left:149.20px;top:523.14px;font-size:12.4px;line-height:16.12px;font-weight:700;color:#2d2d37;letter-spacing:0.188px;">Block Chain, Agile Methodology,</div>
<div class="t" id="t15" style="left:149.75px;top:540.14px;font-size:12.4px;line-height:16.12px;font-weight:700;color:#2d2d37;letter-spacing:0.098px;">and Regulatory Compliance</div>
<div class="t" id="t16" style="left:397.75px;top:286.25px;font-size:13.4px;line-height:17.42px;font-weight:400;color:#2d2d37;letter-spacing:0.115px;"><b>Underwriting:</b> better risk assessment, STP processing are enabling policies</div>
<div class="t" id="t17" style="left:397.75px;top:303.25px;font-size:13.4px;line-height:17.42px;font-weight:400;color:#2d2d37;letter-spacing:0.176px;">being priced, distributed , underwritten, and issued in near real time. Predictive</div>
<div class="t" id="t18" style="left:398.05px;top:320.25px;font-size:13.4px;line-height:17.42px;font-weight:400;color:#2d2d37;letter-spacing:0.246px;">underwriting is enabling better pricing by accurate prediction of future risks</div>
<div class="t" id="t19" style="left:398.30px;top:337.25px;font-size:13.4px;line-height:17.42px;font-weight:400;color:#2d2d37;letter-spacing:0.241px;">and eliminate human errors with greater profitability.</div>
<div class="t" id="t20" style="left:398.65px;top:356.85px;font-size:13.4px;line-height:17.42px;font-weight:400;color:#2d2d37;letter-spacing:0.183px;"><b>Claims:</b> AI is being used to detect fraudulent claims and partial automation of</div>
<div class="t" id="t21" style="left:398.30px;top:373.85px;font-size:13.4px;line-height:17.42px;font-weight:400;color:#2d2d37;letter-spacing:0.183px;">claims process flow to enable straight-through-processing claims in near</div>
<div class="t" id="t22" style="left:398.15px;top:390.85px;font-size:13.4px;line-height:17.42px;font-weight:400;color:#2d2d37;letter-spacing:0.525px;">future.</div>
<div class="t" id="t23" style="left:398.65px;top:411.65px;font-size:13.4px;line-height:17.42px;font-weight:400;color:#2d2d37;letter-spacing:0.194px;"><b>Customer-Centric:</b> tailer product and services to meet individual customer</div>
<div class="t" id="t24" style="left:398.00px;top:428.65px;font-size:13.4px;line-height:17.42px;font-weight:400;color:#2d2d37;letter-spacing:0.136px;">needs and design personalized insurance plans to enhance customer</div>
<div class="t" id="t25" style="left:398.65px;top:445.65px;font-size:13.4px;line-height:17.42px;font-weight:400;color:#2d2d37;letter-spacing:0.198px;">satisfaction and loyalty. Chatbots and AI is delivering greater customer</div>
<div class="t" id="t26" style="left:398.55px;top:462.65px;font-size:13.4px;line-height:17.42px;font-weight:400;color:#2d2d37;letter-spacing:0.203px;">experience by interacting, helping them understand policies, file claims and</div>
<div class="t" id="t27" style="left:398.00px;top:479.65px;font-size:13.4px;line-height:17.42px;font-weight:400;color:#2d2d37;letter-spacing:0.160px;">manage their insurance needs at lower costs.</div>
<div class="t" id="t28" style="left:396.65px;top:515.95px;font-size:13.4px;line-height:17.42px;font-weight:400;color:#2d2d37;letter-spacing:0.359px;"><b>Big Data Technologies, Blockchain, Smart Contract etc.</b> are changing the</div>
<div class="t" id="t29" style="left:397.25px;top:533.05px;font-size:13.4px;line-height:17.42px;font-weight:400;color:#2d2d37;letter-spacing:0.244px;">functioning of the industry by addressing forging of documents for financial gains,</div>
<div class="t" id="t30" style="left:396.90px;top:550.15px;font-size:13.4px;line-height:17.42px;font-weight:400;color:#2d2d37;letter-spacing:0.252px;">theft of insured property, proving liability while saving significant amount of time,</div>
<div class="t" id="t31" style="left:396.50px;top:567.15px;font-size:13.4px;line-height:17.42px;font-weight:400;color:#2d2d37;letter-spacing:0.180px;">money and labour. Identify patterns and detect anomalies in large datasets to</div>
<div class="t" id="t32" style="left:397.05px;top:584.15px;font-size:13.4px;line-height:17.42px;font-weight:400;color:#2d2d37;letter-spacing:0.223px;">detect potential fraud. <b>Blockchain</b> technology is providing decentralized and open</div>
<div class="t" id="t33" style="left:396.25px;top:601.15px;font-size:13.4px;line-height:17.42px;font-weight:400;color:#2d2d37;letter-spacing:0.219px;">platform to allow creation of creation of a transparent, secure, and robust</div>
<div class="t" id="t34" style="left:396.45px;top:618.15px;font-size:13.4px;line-height:17.42px;font-weight:400;color:#2d2d37;letter-spacing:0.226px;">database.</div>
<div class="t" id="t35" style="left:397.10px;top:638.65px;font-size:13.4px;line-height:17.42px;font-weight:400;color:#2d2d37;letter-spacing:0.192px;"><b>Agile cross functional</b> team enabling acceleration in speed of new product</div>
<div class="t" id="t36" style="left:396.70px;top:655.65px;font-size:13.4px;line-height:17.42px;font-weight:400;color:#2d2d37;letter-spacing:0.170px;">launches, better risk management, enhanced customer engagement and foster</div>
<div class="t" id="t37" style="left:396.65px;top:672.65px;font-size:13.4px;line-height:17.42px;font-weight:400;color:#2d2d37;letter-spacing:0.147px;">innovations. <b>Regulatory Compliance</b> by automating processes and data</div>
<div class="t" id="t38" style="left:396.50px;top:689.65px;font-size:13.4px;line-height:17.42px;font-weight:400;color:#2d2d37;letter-spacing:0.206px;">management.</div>
<div class="t" id="t39" style="left:931.35px;top:319.15px;font-size:13.2px;line-height:17.16px;font-weight:700;color:#59636d;letter-spacing:0.100px;">AI is not just a</div>
<div class="t" id="t40" style="left:931.10px;top:335.75px;font-size:13.2px;line-height:17.16px;font-weight:700;color:#59636d;letter-spacing:0.156px;">technological shift – it is a</div>
<div class="t" id="t41" style="left:930.80px;top:353.45px;font-size:13.2px;line-height:17.16px;font-weight:700;color:#59636d;letter-spacing:0.271px;">strategic inflection point</div>
<div class="t" id="t42" style="left:931.15px;top:369.05px;font-size:13.2px;line-height:17.16px;font-weight:700;color:#59636d;letter-spacing:0.199px;">for insurers.</div>
<div class="t" id="t43" style="left:930.50px;top:402.95px;font-size:14.0px;line-height:18.2px;font-weight:400;color:#68737d;letter-spacing:0.452px;">It redefines how the risk is</div>
<div class="t" id="t44" style="left:930.75px;top:419.75px;font-size:14.0px;line-height:18.2px;font-weight:400;color:#68737d;letter-spacing:0.499px;">created, measured and</div>
<div class="t" id="t45" style="left:931.80px;top:436.55px;font-size:14.0px;line-height:18.2px;font-weight:400;color:#68737d;letter-spacing:0.501px;">transferred and brings</div>
<div class="t" id="t46" style="left:930.30px;top:453.35px;font-size:14.0px;line-height:18.2px;font-weight:400;color:#68737d;letter-spacing:0.663px;">both opportunity and</div>
<div class="t" id="t47" style="left:930.45px;top:470.15px;font-size:14.0px;line-height:18.2px;font-weight:400;color:#68737d;letter-spacing:0.497px;">existential risk if remain</div>
<div class="t" id="t48" style="left:930.30px;top:487.05px;font-size:14.0px;line-height:18.2px;font-weight:400;color:#68737d;letter-spacing:0.685px;">inactive</div>
<div class="t" id="t49" style="left:912.15px;top:583.14px;font-size:11.9px;line-height:15.47px;font-weight:400;color:#3a3a40;letter-spacing:0.219px;">“AI is no longer an edge initiative –</div>
<div class="t" id="t50" style="left:911.15px;top:598.34px;font-size:11.9px;line-height:15.47px;font-weight:400;color:#3a3a40;letter-spacing:0.304px;">it’s strategic imperative. For insurers,</div>
<div class="t" id="t51" style="left:911.55px;top:612.54px;font-size:11.9px;line-height:15.47px;font-weight:400;color:#3a3a40;letter-spacing:0.328px;">the next two years will separate the</div>
<div class="t" id="t52" style="left:911.25px;top:628.94px;font-size:11.9px;line-height:15.47px;font-weight:400;color:#3a3a40;letter-spacing:0.305px;">leaders from the rest”</div>
<div class="t" id="t53" style="left:911.40px;top:644.34px;font-size:11.9px;line-height:15.47px;font-weight:400;color:#3a3a40;letter-spacing:0.444px;">McKinsey, The State of AI 2025</div>
<div class="t" id="t54" style="left:1045.65px;width:100px;text-align:center;top:696.04px;font-size:12px;line-height:15.6px;font-weight:400;color:#3a3a40;">6</div>
<div class="t" id="t55" style="left:80.55000000000001px;width:100px;text-align:center;top:287.45px;font-size:14px;line-height:18.2px;font-weight:400;color:#56626b;-webkit-text-stroke:0.45px #56626b;">4</div>
<div class="t" id="t56" style="left:79.0px;width:100px;text-align:center;top:519.75px;font-size:14px;line-height:18.2px;font-weight:400;color:#56626b;-webkit-text-stroke:0.45px #56626b;">5</div>
<div class="t" id="t57" style="left:16.95px;top:6.94px;font-size:11.6px;line-height:15.08px;font-weight:400;color:#f2f2f2;letter-spacing:1.422px;-webkit-text-stroke:0.4px #f2f2f2;">zoom</div>
<div class="t" id="t58" style="left:17.00px;top:21.26px;font-size:15.8px;line-height:20.54px;font-weight:400;color:#f5f5f5;letter-spacing:0.512px;-webkit-text-stroke:0.45px #f5f5f5;">Workplace</div>
<div class="t" id="t59" style="left:206.20px;top:20.05px;font-size:13px;line-height:16.9px;font-weight:400;color:#cfcfd1;letter-spacing:0.270px;">Meeting</div>
<div class="t" id="t60" style="left:477.80px;top:20.05px;font-size:13px;line-height:16.9px;font-weight:400;color:#ededed;letter-spacing:-0.32px;width:184.2px;overflow:hidden;">Aon Re- Atul Kumar Malik's screen</div>
<div class="t" id="t61" style="left:409.75px;width:100px;text-align:center;top:20.74px;font-size:10.5px;line-height:13.65px;font-weight:400;color:#fff;">AR</div>
<div class="t" id="t62" style="left:1137.00px;top:14.05px;font-size:14px;line-height:18.2px;font-weight:400;color:#e4e4e6;letter-spacing:0.021px;">Sign in</div>
<div class="t" id="t63" style="left:1247.30px;top:16.05px;font-size:13px;line-height:16.9px;font-weight:400;color:#e4e4e6;letter-spacing:-0.269px;">Recording...</div>
<div class="t" id="t64" style="left:1380.30px;top:16.05px;font-size:13px;line-height:16.9px;font-weight:400;color:#e4e4e6;letter-spacing:-0.531px;">View</div>
<div class="t" id="t65" style="left:1183.80px;top:315.55px;font-size:13px;line-height:16.9px;font-weight:400;color:#f2f2f2;letter-spacing:-0.159px;">Remove spotlight</div>
<div class="t" id="t66" style="left:1171.95px;top:535.85px;font-size:13px;line-height:16.9px;font-weight:400;color:#f0f0f0;letter-spacing:0.023px;">Aon Re- Atul Kumar Malik</div>
<div class="t" id="t67" style="left:1298.00px;top:376.14px;font-size:11.9px;line-height:15.47px;font-weight:700;color:#20262b;letter-spacing:-0.050px;">Welcome to AonGPT</div>
<div class="t" id="t68" style="left:37.10px;top:839.44px;font-size:12.3px;line-height:15.99px;font-weight:400;color:#f4f4f4;letter-spacing:0.537px;-webkit-text-stroke:0.4px #f4f4f4;">Audio</div>
<div class="t" id="t69" style="left:135.40px;top:839.44px;font-size:12.3px;line-height:15.99px;font-weight:400;color:#f4f4f4;letter-spacing:0.147px;-webkit-text-stroke:0.4px #f4f4f4;">Video</div>
<div class="t" id="t70" style="left:384.40px;top:839.44px;font-size:12.3px;line-height:15.99px;font-weight:400;color:#f4f4f4;letter-spacing:0.295px;-webkit-text-stroke:0.4px #f4f4f4;">Participants</div>
<div class="t" id="t71" style="left:519.60px;top:839.44px;font-size:12.3px;line-height:15.99px;font-weight:400;color:#f4f4f4;letter-spacing:-0.019px;-webkit-text-stroke:0.4px #f4f4f4;">Chat</div>
<div class="t" id="t72" style="left:605.20px;top:839.44px;font-size:12.3px;line-height:15.99px;font-weight:400;color:#f4f4f4;letter-spacing:-0.388px;-webkit-text-stroke:0.4px #f4f4f4;">React</div>
<div class="t" id="t73" style="left:697.25px;top:839.44px;font-size:12.3px;line-height:15.99px;font-weight:400;color:#f4f4f4;letter-spacing:-0.287px;-webkit-text-stroke:0.4px #f4f4f4;">Share</div>
<div class="t" id="t74" style="left:777.50px;top:839.44px;font-size:12.3px;line-height:15.99px;font-weight:400;color:#f4f4f4;letter-spacing:0.405px;-webkit-text-stroke:0.4px #f4f4f4;">Host tools</div>
<div class="t" id="t75" style="left:857.00px;top:839.44px;font-size:12.3px;line-height:15.99px;font-weight:400;color:#f4f4f4;letter-spacing:0.369px;-webkit-text-stroke:0.4px #f4f4f4;">AI Companion</div>
<div class="t" id="t76" style="left:974.10px;top:839.44px;font-size:12.3px;line-height:15.99px;font-weight:400;color:#f4f4f4;letter-spacing:0.084px;-webkit-text-stroke:0.4px #f4f4f4;">Apps</div>
<div class="t" id="t77" style="left:1038.30px;top:837.94px;font-size:12.6px;line-height:16.38px;font-weight:400;color:#9b9b9b;letter-spacing:0.171px;">Pause/stop recording</div>
<div class="t" id="t78" style="left:1183.10px;top:839.44px;font-size:12.3px;line-height:15.99px;font-weight:400;color:#f4f4f4;letter-spacing:0.635px;-webkit-text-stroke:0.4px #f4f4f4;">Meeting info</div>
<div class="t" id="t79" style="left:1300.40px;top:839.44px;font-size:12.3px;line-height:15.99px;font-weight:400;color:#f4f4f4;letter-spacing:0.812px;-webkit-text-stroke:0.4px #f4f4f4;">More</div>
<div class="t" id="t80" style="left:1533.90px;top:839.44px;font-size:12.3px;line-height:15.99px;font-weight:400;color:#f4f4f4;letter-spacing:-0.280px;-webkit-text-stroke:0.4px #f4f4f4;">Leave</div>
<div class="t" id="t81" style="left:434.95px;top:813.34px;font-size:12px;line-height:15.6px;font-weight:400;color:#c4c4c4;letter-spacing:0.283px;">768</div>
<div class="t" id="t82" style="left:494.5px;width:100px;text-align:center;top:807.14px;font-size:10.5px;line-height:13.65px;font-weight:700;color:#fff;">4</div>
<div class="t" id="t83" style="left:97.25px;top:870.15px;font-size:15.4px;line-height:20.02px;font-weight:400;color:#3f3f3f;letter-spacing:-0.019px;">Type here to search</div>
<div class="t" id="t84" style="left:1491.20px;top:863.44px;font-size:12px;line-height:15.6px;font-weight:400;color:#1c1c1c;letter-spacing:-0.297px;">10:01</div>
<div class="t" id="t85" style="left:1474.80px;top:882.44px;font-size:12px;line-height:15.6px;font-weight:400;color:#1c1c1c;letter-spacing:0.357px;">16/09/2025</div>
<div class="t" id="t86" style="left:1523.6px;width:100px;text-align:center;top:880.14px;font-size:10.5px;line-height:13.65px;font-weight:400;color:#111;">12</div>
<div class="t" id="t87" style="left:470.65px;top:874.52px;font-size:7px;line-height:9.1px;font-weight:700;color:#fff;letter-spacing:0.213px;">zoom</div>
</div>
</body>
</html>
